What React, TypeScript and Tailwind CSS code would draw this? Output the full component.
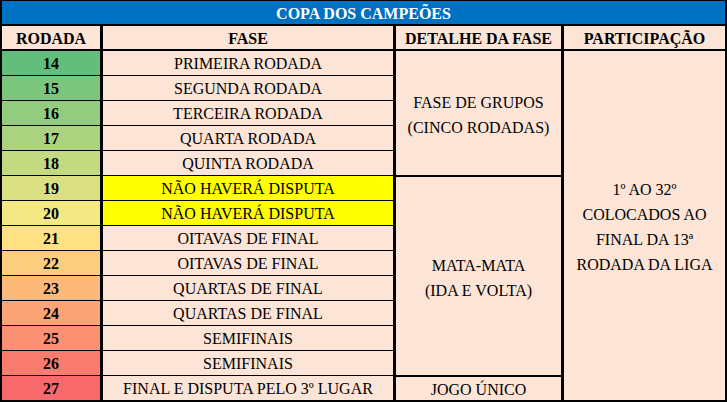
const rows = [
  { n: 14, fase: 'PRIMEIRA RODADA', bg: 'bg-[#63be7b]', faseBg: 'bg-[#fce4d6]' },
  { n: 15, fase: 'SEGUNDA RODADA', bg: 'bg-[#7bc57c]', faseBg: 'bg-[#fce4d6]' },
  { n: 16, fase: 'TERCEIRA RODADA', bg: 'bg-[#93cc7e]', faseBg: 'bg-[#fce4d6]' },
  { n: 17, fase: 'QUARTA RODADA', bg: 'bg-[#abd37f]', faseBg: 'bg-[#fce4d6]' },
  { n: 18, fase: 'QUINTA RODADA', bg: 'bg-[#c3da81]', faseBg: 'bg-[#fce4d6]' },
  { n: 19, fase: 'NÃO HAVERÁ DISPUTA', bg: 'bg-[#dbe182]', faseBg: 'bg-[#ffff00]' },
  { n: 20, fase: 'NÃO HAVERÁ DISPUTA', bg: 'bg-[#f3e883]', faseBg: 'bg-[#ffff00]' },
  { n: 21, fase: 'OITAVAS DE FINAL', bg: 'bg-[#fee182]', faseBg: 'bg-[#fce4d6]' },
  { n: 22, fase: 'OITAVAS DE FINAL', bg: 'bg-[#fdcd7e]', faseBg: 'bg-[#fce4d6]' },
  { n: 23, fase: 'QUARTAS DE FINAL', bg: 'bg-[#fcb97a]', faseBg: 'bg-[#fce4d6]' },
  { n: 24, fase: 'QUARTAS DE FINAL', bg: 'bg-[#fba577]', faseBg: 'bg-[#fce4d6]' },
  { n: 25, fase: 'SEMIFINAIS', bg: 'bg-[#fa9173]', faseBg: 'bg-[#fce4d6]' },
  { n: 26, fase: 'SEMIFINAIS', bg: 'bg-[#f97d6f]', faseBg: 'bg-[#fce4d6]' },
  { n: 27, fase: 'FINAL E DISPUTA PELO 3º LUGAR', bg: 'bg-[#f8696b]', faseBg: 'bg-[#fce4d6]' },
];

export default function App() {
  return (
    <div className="flex h-[402px] w-[727px] flex-col bg-black px-[2px] [font-family:'Liberation_Serif',serif] text-[16px] leading-none text-black">
      <div className="mt-px flex h-[23px] items-center justify-center bg-[#0070c0] pt-[2px] font-bold text-white">
        COPA DOS CAMPEÕES
      </div>

      <div className="mt-[2px] flex h-[23px] gap-[3px] font-bold">
        <div className="flex w-[98px] items-center justify-center bg-[#fce4d6] pt-[2px]">RODADA</div>
        <div className="flex w-[290px] items-center justify-center bg-[#fce4d6] pt-[2px]">FASE</div>
        <div className="flex w-[165px] items-center justify-center bg-[#fce4d6] pt-[2px]">DETALHE DA FASE</div>
        <div className="flex flex-1 items-center justify-center bg-[#fce4d6] pt-[2px]">PARTICIPAÇÃO</div>
      </div>

      <div className="mt-[2px] flex h-[349px] gap-[3px]">
        <div className="flex w-[391px] flex-col gap-px">
          {rows.map((r) => (
            <div key={r.n} className="flex h-[24px] gap-[3px]">
              <div className={`flex w-[98px] items-center justify-center pt-[2px] font-bold ${r.bg}`}>{r.n}</div>
              <div className={`flex flex-1 items-center justify-center pt-[2px] ${r.faseBg}`}>{r.fase}</div>
            </div>
          ))}
        </div>

        <div className="flex w-[165px] flex-col gap-[2px]">
          <div className="flex h-[124px] flex-col items-center justify-center bg-[#fce4d6] pt-[3px] leading-[25px]">
            <span>FASE DE GRUPOS</span>
            <span>(CINCO RODADAS)</span>
          </div>
          <div className="flex h-[198px] flex-col items-center justify-center bg-[#fce4d6] pt-[3px] leading-[25px]">
            <span>MATA-MATA</span>
            <span>(IDA E VOLTA)</span>
          </div>
          <div className="flex h-[23px] items-center justify-center bg-[#fce4d6] pt-[2px]">JOGO ÚNICO</div>
        </div>

        <div className="flex flex-1 flex-col items-center justify-center bg-[#fce4d6] pt-[3px] text-center leading-[25px]">
          <span>1º AO 32º</span>
          <span>COLOCADOS AO</span>
          <span>FINAL DA 13ª</span>
          <span>RODADA DA LIGA</span>
        </div>
      </div>
    </div>
  );
}
